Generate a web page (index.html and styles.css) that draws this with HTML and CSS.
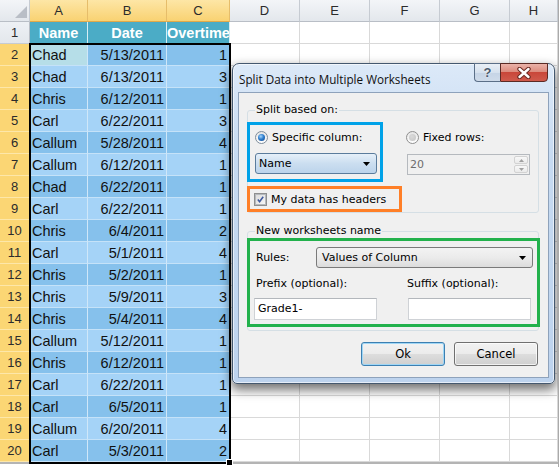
FILE: index.html
```html
<!DOCTYPE html>
<html>
<head>
<meta charset="utf-8">
<link rel="stylesheet" href="styles.css">
</head>
<body>
<div class="screen">
  <div class="sheet">
    <div class="row hd">
      <span class="corner"><svg width="12" height="12" viewBox="0 0 12 12"><polygon points="12,0 12,12 0,12" fill="#b9bec6"/></svg></span>
      <span class="s">A</span><span class="s">B</span><span class="s">C</span><span>D</span><span>E</span><span>F</span><span>G</span><span>H</span>
    </div>
    <div class="row">
      <span class="rh">1</span><span class="th">Name</span><span class="th">Date</span><span class="th ov">Overtime</span><span></span><span></span><span></span><span></span><span></span>
    </div>
    <div class="row dk"><span class="rh s">2</span><span class="n act">Chad</span><span class="d">5/13/2011</span><span class="d">1</span><span></span><span></span><span></span><span></span><span></span></div>
    <div class="row lt"><span class="rh s">3</span><span class="n">Chad</span><span class="d">6/13/2011</span><span class="d">3</span><span></span><span></span><span></span><span></span><span></span></div>
    <div class="row dk"><span class="rh s">4</span><span class="n">Chris</span><span class="d">6/12/2011</span><span class="d">1</span><span></span><span></span><span></span><span></span><span></span></div>
    <div class="row lt"><span class="rh s">5</span><span class="n">Carl</span><span class="d">6/22/2011</span><span class="d">3</span><span></span><span></span><span></span><span></span><span></span></div>
    <div class="row dk"><span class="rh s">6</span><span class="n">Callum</span><span class="d">5/28/2011</span><span class="d">4</span><span></span><span></span><span></span><span></span><span></span></div>
    <div class="row lt"><span class="rh s">7</span><span class="n">Callum</span><span class="d">6/12/2011</span><span class="d">1</span><span></span><span></span><span></span><span></span><span></span></div>
    <div class="row dk"><span class="rh s">8</span><span class="n">Chad</span><span class="d">6/22/2011</span><span class="d">1</span><span></span><span></span><span></span><span></span><span></span></div>
    <div class="row lt"><span class="rh s">9</span><span class="n">Carl</span><span class="d">6/22/2011</span><span class="d">1</span><span></span><span></span><span></span><span></span><span></span></div>
    <div class="row dk"><span class="rh s">10</span><span class="n">Chris</span><span class="d">6/4/2011</span><span class="d">2</span><span></span><span></span><span></span><span></span><span></span></div>
    <div class="row lt"><span class="rh s">11</span><span class="n">Carl</span><span class="d">5/1/2011</span><span class="d">4</span><span></span><span></span><span></span><span></span><span></span></div>
    <div class="row dk"><span class="rh s">12</span><span class="n">Chris</span><span class="d">5/2/2011</span><span class="d">1</span><span></span><span></span><span></span><span></span><span></span></div>
    <div class="row lt"><span class="rh s">13</span><span class="n">Chris</span><span class="d">5/9/2011</span><span class="d">3</span><span></span><span></span><span></span><span></span><span></span></div>
    <div class="row dk"><span class="rh s">14</span><span class="n">Chris</span><span class="d">5/4/2011</span><span class="d">4</span><span></span><span></span><span></span><span></span><span></span></div>
    <div class="row lt"><span class="rh s">15</span><span class="n">Callum</span><span class="d">5/12/2011</span><span class="d">1</span><span></span><span></span><span></span><span></span><span></span></div>
    <div class="row dk"><span class="rh s">16</span><span class="n">Chris</span><span class="d">6/12/2011</span><span class="d">1</span><span></span><span></span><span></span><span></span><span></span></div>
    <div class="row lt"><span class="rh s">17</span><span class="n">Carl</span><span class="d">6/22/2011</span><span class="d">1</span><span></span><span></span><span></span><span></span><span></span></div>
    <div class="row dk"><span class="rh s">18</span><span class="n">Carl</span><span class="d">6/5/2011</span><span class="d">1</span><span></span><span></span><span></span><span></span><span></span></div>
    <div class="row lt"><span class="rh s">19</span><span class="n">Callum</span><span class="d">6/20/2011</span><span class="d">4</span><span></span><span></span><span></span><span></span><span></span></div>
    <div class="row dk"><span class="rh s">20</span><span class="n">Carl</span><span class="d">5/3/2011</span><span class="d">2</span><span></span><span></span><span></span><span></span><span></span></div>
  </div>

  <div class="selection"></div>
  <div class="fillhandle"></div>

  <div class="dlg">
    <div class="titlebar">
      <span class="title">Split Data into Multiple Worksheets</span>
      <span class="tbtn help">?</span>
      <span class="tbtn close"><svg width="16" height="12" viewBox="0 0 16 12"><path d="M3.5 2 L12.5 10 M12.5 2 L3.5 10" stroke="#6b2a22" stroke-width="4.4" stroke-linecap="round"/><path d="M3.5 2 L12.5 10 M12.5 2 L3.5 10" stroke="#fff" stroke-width="2.4" stroke-linecap="round"/></svg></span>
    </div>
    <div class="client">
      <div class="group g1">
        <div class="legend">Split based on:</div>
        <div class="g1row">
          <div class="hl blue">
            <div class="opt"><span class="radio on"><span class="dot"></span></span>Specific column:</div>
            <div class="combo focus">Name<svg class="arrow" width="7" height="4" viewBox="0 0 7 4"><polygon points="0,0 7,0 3.5,4" fill="#000"/></svg></div>
          </div>
          <div class="fixed">
            <div class="opt"><span class="radio"><span class="dot"></span></span>Fixed rows:</div>
            <div class="spin"><span class="spinval">20</span><span class="spinbtns"><span class="sb"><svg width="5" height="3" viewBox="0 0 5 3"><polygon points="0,3 5,3 2.5,0" fill="#a0a0a0"/></svg></span><span class="sb"><svg width="5" height="3" viewBox="0 0 5 3"><polygon points="0,0 5,0 2.5,3" fill="#a0a0a0"/></svg></span></span></div>
          </div>
        </div>
        <div class="hl orange"><span class="check"><svg width="11" height="11" viewBox="0 0 11 11"><polyline points="2.2,5.6 4.4,8.3 8.8,2.2" fill="none" stroke="#3f5a9e" stroke-width="1.9"/></svg></span>My data has headers</div>
      </div>

      <div class="group g2">
        <div class="legend">New worksheets name</div>
        <div class="hl green">
          <div class="rules"><span class="lbl">Rules:</span><div class="combo plain">Values of Column<svg class="arrow" width="7" height="4" viewBox="0 0 7 4"><polygon points="0,0 7,0 3.5,4" fill="#000"/></svg></div></div>
          <div class="fields">
            <div class="field"><span class="flbl">Prefix (optional):</span><div class="text">Grade1-</div></div>
            <div class="field"><span class="flbl">Suffix (optional):</span><div class="text"></div></div>
          </div>
        </div>
      </div>

      <div class="buttons"><span class="btn def">Ok</span><span class="btn">Cancel</span></div>
    </div>
  </div>
</div>
</body>
</html>
```
FILE: styles.css
```css
* { box-sizing: border-box; margin: 0; padding: 0; }
html, body { width: 559px; height: 467px; overflow: hidden; background: #fff; }
body { font-family: "Liberation Sans", Arial, sans-serif; }

.screen { position: relative; width: 559px; height: 467px; overflow: hidden; border-right: 1px solid #aaaaaa; }

.sheet { display: flex; flex-direction: column; width: 558px; border-bottom: 2px solid #b4b4b4; }
.row { display: grid; grid-template-columns: 30px 58px 79px 63px 70px 70px 70px 70px 48px; height: 22px; }
.row > * {
  border-right: 1px solid #d9d9d9; border-bottom: 1px solid #d9d9d9;
  overflow: hidden; white-space: nowrap;
  font-size: 14.5px; line-height: 21px; padding: 1px 2px 0; color: #000;
}

/* column headers */
.hd > * {
  background: linear-gradient(#f3f5f8, #e3e7ec);
  border-right-color: #c6cbd2; border-bottom-color: #b9bec6;
  text-align: center; color: #2b2b2b; font-size: 13px; line-height: 21px; padding: 0;
}
.hd > .s { background: linear-gradient(#fde6a6, #f9d272); border-right-color: #e6bd6a; border-bottom-color: #e0a94a; }
.hd .corner { display: flex; align-items: flex-end; justify-content: flex-end; padding: 0 2px 3px 0; }

/* row headers */
.row > .rh {
  background: linear-gradient(#eef1f5, #e3e7ec);
  border-right-color: #b9bec6; border-bottom-color: #c6cbd2;
  text-align: center; color: #2b2b2b; font-size: 13px; line-height: 21px; padding: 0;
}
.row > .rh.s { background: #fbd674; border-bottom-color: #fde7a9; border-right-color: #d9a441; }

/* table header row */
.row > .th {
  background: #4bacc6; color: #fff; font-weight: bold; text-align: center;
  border-right-color: #d6eef4; border-bottom-color: #4bacc6;
}
.row > .th.ov { text-align: left; padding-left: 0; }

/* data */
.dk > .n, .dk > .d { background: #86c1ec; }
.lt > .n, .lt > .d { background: #a5d3f7; }
.row > .n, .row > .d { border-right-color: #cfe7f9; border-bottom-color: #c5e2f8; color: #111; }
.row > .d { text-align: right; }
.row > .n.act { background: #b6dee8; }

.selection {
  position: absolute; left: 29px; top: 43px; width: 202px; height: 421px;
  border: 2px solid #000;
}
.fillhandle {
  position: absolute; left: 226px; top: 459px; width: 7px; height: 7px;
  background: #000; border: 1px solid #fff;
}

/* dialog */
.dlg {
  position: absolute; left: 232px; top: 63px; width: 323px; height: 321px;
  border: 1px solid #44586f; border-radius: 7px 7px 5px 5px;
  background: linear-gradient(#dce9f8, #c6daf1 30%, #bdd3ee);
  box-shadow: 0 5px 11px 1px rgba(0,0,0,0.55), inset 0 0 0 1px rgba(255,255,255,0.6);
  padding: 0 5px 5px 5px;
  display: flex; flex-direction: column;
  font-family: "DejaVu Sans", sans-serif; font-size: 11px; color: #000;
}
.titlebar { height: 28px; display: flex; align-items: flex-start; flex: none; }
.title { font-family: "Open Sans", sans-serif; font-size: 11.7px; line-height: 14px; margin: 8px 0 0 1px; color: #101010; flex: 1; }
.tbtn { height: 19px; margin-top: -1px; display: flex; align-items: center; justify-content: center; }
.help {
  width: 26px; border: 1px solid #5b6f88; border-right: none; border-radius: 0 0 0 4px;
  background: linear-gradient(#e9eff6, #d6e1ee 50%, #c5d4e6 51%, #cfdbea);
  font-family: "Liberation Sans", sans-serif; font-weight: bold; font-size: 13px; color: #4a5a6e;
  text-shadow: 0 0 2px #fff;
}
.close {
  width: 48px; margin-right: 1px; border: 1px solid #5b2a24; border-radius: 0 0 4px 0;
  background: linear-gradient(#eab2a8, #dc8c7e 45%, #c9473a 50%, #cf5a4c);
}

.client {
  flex: 1; background: #f0f0f0; border: 1px solid #8ea2bb;
  display: flex; flex-direction: column;
}
.group { border: 1px solid #d5dfe5; border-radius: 3px; width: 292px; margin-left: 8px; }
.g1 { margin-top: 17px; }
.g2 { margin-top: 18px; padding-bottom: 3px; }
.legend { width: fit-content; margin: -8px 0 0 7px; padding: 0 1px; background: #f0f0f0; line-height: 14px; color: #000; }

.g1row { display: flex; margin-top: 5px; }
.hl { border: 3px solid; margin-left: -1px; }
.blue { border-color: #00a2e8; width: 136px; height: 60px; padding: 5px 0 0 5px; }
.orange { border-color: #ff7f27; width: 155px; height: 26px; margin-top: 4px; display: flex; align-items: center; padding-left: 4px; gap: 4px; }
.green { border-color: #22b14c; width: 293px; height: 89px; padding: 6px 0 0 0; }

.opt { display: flex; align-items: center; gap: 4px; height: 14px; }
.radio {
  width: 13px; height: 13px; border-radius: 50%; border: 1px solid #8f8f8f;
  background: linear-gradient(#e4e4e4, #ffffff);
  display: flex; align-items: center; justify-content: center; flex: none;
}
.radio .dot { width: 7px; height: 7px; border-radius: 50%; background: radial-gradient(circle at 40% 35%, #d9d9d9, #c4c4c4); }
.radio.on { border-color: #7e8d9b; }
.radio.on .dot { background: radial-gradient(circle at 40% 35%, #a6d5fa 0, #2f7fce 45%, #0b3f86 100%); }

.combo {
  display: flex; align-items: center; justify-content: space-between;
  height: 21px; border-radius: 3px; padding: 0 6px 0 3px; line-height: 14px;
}
.combo.focus { width: 122px; margin-top: 9px; border: 1px solid #5b7c9c; background: linear-gradient(#e6f0f9, #cbdef0 50%, #bcd4eb); }
.combo.plain { width: 217px; border: 1px solid #7a7a7a; background: linear-gradient(#f3f3f3, #ebebeb 50%, #dcdcdc); padding-left: 5px; }

.fixed { margin-left: 23px; padding-top: 8px; }
.spin {
  margin-top: 10px; margin-left: 1px; width: 123px; height: 21px;
  border: 1px solid #b5b9be; background: #f0f0f0;
  display: flex; align-items: center; justify-content: space-between; padding-left: 2px;
}
.spinval { color: #6d6d6d; }
.spinbtns { display: flex; flex-direction: column; gap: 1px; margin-right: 1px; }
.sb { width: 14px; height: 8px; border: 1px solid #d2d2d2; border-radius: 2px; background: linear-gradient(#f8f8f8, #eaeaea); display: flex; align-items: center; justify-content: center; }

.check {
  width: 13px; height: 13px; border: 1px solid #8e8f8f; background: #fff;
  display: flex; align-items: center; justify-content: center; flex: none;
}
.check svg { background: linear-gradient(135deg, #dcdcdc, #f6f6f6); border: 1px solid #b5b9bd; width: 11px; height: 11px; }

.rules { display: flex; align-items: center; height: 21px; padding-left: 6px; }
.lbl { width: 60px; }
.fields { display: flex; gap: 31px; margin-top: 9px; padding-left: 4px; }
.field { display: flex; flex-direction: column; width: 123px; }
.flbl { line-height: 14px; padding-left: 2px; height: 14px; }
.field:last-child .flbl { padding-left: 0; margin-left: -1px; }
.text { margin-top: 7px; height: 22px; border: 1px solid #cfd2d6; border-top-color: #b3b7bc; background: #fff; padding-left: 3px; line-height: 20px; }

.buttons { display: flex; justify-content: flex-end; gap: 9px; padding-right: 10px; margin-top: 11px; }
.btn {
  width: 84px; height: 24px; border: 1px solid #707070; border-radius: 3px;
  background: linear-gradient(#f2f2f2, #ebebeb 50%, #dddddd 51%, #cfcfcf);
  display: flex; align-items: center; justify-content: center; font-size: 11.5px;
  box-shadow: inset 0 0 0 1px rgba(255,255,255,0.7);
}
.btn.def { border-color: #3c7fb1; box-shadow: inset 0 0 0 1px #9fd6f5; }
```
